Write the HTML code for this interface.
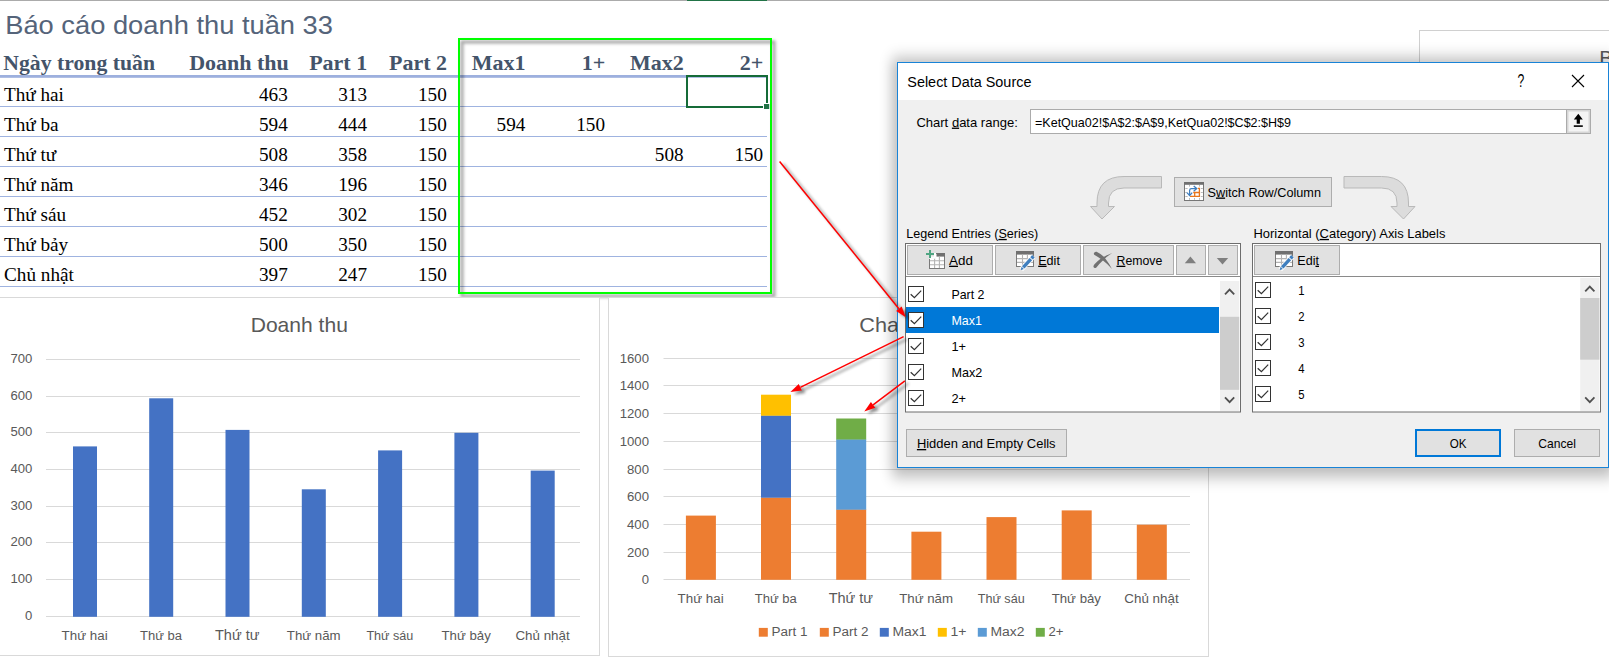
<!DOCTYPE html>
<html><head><meta charset="utf-8"><title>Select Data Source</title>
<style>
html,body{margin:0;padding:0;background:#fff;}
body{width:1609px;height:659px;overflow:hidden;font-family:"Liberation Sans",sans-serif;}
svg{display:block;position:absolute;left:0;top:0;}
text{font-family:"Liberation Sans",sans-serif;white-space:pre;}
text.sf{font-family:"Liberation Serif",serif;}
</style></head><body>
<svg width="1609" height="659" viewBox="0 0 1609 659">
<defs>
<filter id="dlgsh" x="-10%" y="-15%" width="120%" height="140%"><feGaussianBlur stdDeviation="6.5 8"/></filter>
<filter id="gsh" x="-10%" y="-10%" width="125%" height="125%"><feGaussianBlur stdDeviation="1.8"/></filter>
<filter id="ash" x="-20%" y="-20%" width="150%" height="150%"><feGaussianBlur stdDeviation="1.5"/></filter>
</defs>
<rect x="0" y="0" width="1609" height="659" fill="#fff"/>

<rect x="0" y="0" width="1609" height="1" fill="#ababab"/>
<rect x="687" y="0" width="80" height="1" fill="#217346"/>
<text y="33.8" font-size="26.2" fill="#55647a" x="5.2" textLength="327.8" lengthAdjust="spacingAndGlyphs" >Báo cáo doanh thu tuần 33</text>
<text y="69.8" font-size="22" fill="#44546a" class="sf" font-weight="bold" x="3.3" textLength="151.7" lengthAdjust="spacingAndGlyphs" >Ngày trong tuần</text>
<text y="69.8" font-size="22" fill="#44546a" class="sf" font-weight="bold" x="288.8" text-anchor="end" >Doanh thu</text>
<text y="69.8" font-size="22" fill="#44546a" class="sf" font-weight="bold" x="367.2" text-anchor="end" >Part 1</text>
<text y="69.8" font-size="22" fill="#44546a" class="sf" font-weight="bold" x="447.0" text-anchor="end" >Part 2</text>
<text y="69.8" font-size="22" fill="#44546a" class="sf" font-weight="bold" x="525.6" text-anchor="end" >Max1</text>
<text y="69.8" font-size="22" fill="#44546a" class="sf" font-weight="bold" x="605.2" text-anchor="end" >1+</text>
<text y="69.8" font-size="22" fill="#44546a" class="sf" font-weight="bold" x="683.8000000000001" text-anchor="end" >Max2</text>
<text y="69.8" font-size="22" fill="#44546a" class="sf" font-weight="bold" x="763.4000000000001" text-anchor="end" >2+</text>
<rect x="0" y="75" width="767" height="2.8" fill="#9db0de"/>
<text y="100.8" font-size="19.2" fill="#000" class="sf" x="4" >Thứ hai</text>
<text y="100.8" font-size="19.2" fill="#000" class="sf" x="287.8" text-anchor="end" >463</text>
<text y="100.8" font-size="19.2" fill="#000" class="sf" x="367" text-anchor="end" >313</text>
<text y="100.8" font-size="19.2" fill="#000" class="sf" x="446.8" text-anchor="end" >150</text>
<rect x="0" y="106" width="767" height="1" fill="#9fb3e0"/>
<text y="130.8" font-size="19.2" fill="#000" class="sf" x="4" >Thứ ba</text>
<text y="130.8" font-size="19.2" fill="#000" class="sf" x="287.8" text-anchor="end" >594</text>
<text y="130.8" font-size="19.2" fill="#000" class="sf" x="367" text-anchor="end" >444</text>
<text y="130.8" font-size="19.2" fill="#000" class="sf" x="446.8" text-anchor="end" >150</text>
<text y="130.8" font-size="19.2" fill="#000" class="sf" x="525.4" text-anchor="end" >594</text>
<text y="130.8" font-size="19.2" fill="#000" class="sf" x="605" text-anchor="end" >150</text>
<rect x="0" y="136" width="767" height="1" fill="#9fb3e0"/>
<text y="160.8" font-size="19.2" fill="#000" class="sf" x="4" >Thứ tư</text>
<text y="160.8" font-size="19.2" fill="#000" class="sf" x="287.8" text-anchor="end" >508</text>
<text y="160.8" font-size="19.2" fill="#000" class="sf" x="367" text-anchor="end" >358</text>
<text y="160.8" font-size="19.2" fill="#000" class="sf" x="446.8" text-anchor="end" >150</text>
<text y="160.8" font-size="19.2" fill="#000" class="sf" x="683.6" text-anchor="end" >508</text>
<text y="160.8" font-size="19.2" fill="#000" class="sf" x="763.2" text-anchor="end" >150</text>
<rect x="0" y="166" width="767" height="1" fill="#9fb3e0"/>
<text y="190.8" font-size="19.2" fill="#000" class="sf" x="4" >Thứ năm</text>
<text y="190.8" font-size="19.2" fill="#000" class="sf" x="287.8" text-anchor="end" >346</text>
<text y="190.8" font-size="19.2" fill="#000" class="sf" x="367" text-anchor="end" >196</text>
<text y="190.8" font-size="19.2" fill="#000" class="sf" x="446.8" text-anchor="end" >150</text>
<rect x="0" y="196" width="767" height="1" fill="#9fb3e0"/>
<text y="220.8" font-size="19.2" fill="#000" class="sf" x="4" >Thứ sáu</text>
<text y="220.8" font-size="19.2" fill="#000" class="sf" x="287.8" text-anchor="end" >452</text>
<text y="220.8" font-size="19.2" fill="#000" class="sf" x="367" text-anchor="end" >302</text>
<text y="220.8" font-size="19.2" fill="#000" class="sf" x="446.8" text-anchor="end" >150</text>
<rect x="0" y="226" width="767" height="1" fill="#9fb3e0"/>
<text y="250.8" font-size="19.2" fill="#000" class="sf" x="4" >Thứ bảy</text>
<text y="250.8" font-size="19.2" fill="#000" class="sf" x="287.8" text-anchor="end" >500</text>
<text y="250.8" font-size="19.2" fill="#000" class="sf" x="367" text-anchor="end" >350</text>
<text y="250.8" font-size="19.2" fill="#000" class="sf" x="446.8" text-anchor="end" >150</text>
<rect x="0" y="256" width="767" height="1" fill="#9fb3e0"/>
<text y="280.8" font-size="19.2" fill="#000" class="sf" x="4" >Chủ nhật</text>
<text y="280.8" font-size="19.2" fill="#000" class="sf" x="287.8" text-anchor="end" >397</text>
<text y="280.8" font-size="19.2" fill="#000" class="sf" x="367" text-anchor="end" >247</text>
<text y="280.8" font-size="19.2" fill="#000" class="sf" x="446.8" text-anchor="end" >150</text>
<rect x="0" y="286" width="767" height="1" fill="#9fb3e0"/>
<rect x="462" y="42" width="312" height="254" fill="none" stroke="#000" stroke-opacity="0.36" stroke-width="3" filter="url(#gsh)"/>
<rect x="459" y="39" width="312" height="254" fill="none" stroke="#00ff00" stroke-width="2"/>
<rect x="687" y="76" width="80" height="31" fill="none" stroke="#156b38" stroke-width="2"/>
<rect x="763" y="103" width="7" height="7" fill="#fff"/><rect x="764" y="104" width="5.2" height="5" fill="#217346"/>
<rect x="-1.5" y="297.5" width="601" height="358" fill="#fff" stroke="#d9d9d9"/>
<text y="331.8" font-size="20.4" fill="#595959" x="250.7" textLength="97.2" lengthAdjust="spacingAndGlyphs" >Doanh thu</text>
<line x1="46" x2="580" y1="616.5" y2="616.5" stroke="#d9d9d9"/>
<text y="620.2" font-size="12.1" fill="#595959" x="25.0" textLength="7.3" lengthAdjust="spacingAndGlyphs" >0</text>
<line x1="46" x2="580" y1="579.5" y2="579.5" stroke="#d9d9d9"/>
<text y="583.2" font-size="12.1" fill="#595959" x="10.4" textLength="21.9" lengthAdjust="spacingAndGlyphs" >100</text>
<line x1="46" x2="580" y1="542.5" y2="542.5" stroke="#d9d9d9"/>
<text y="546.2" font-size="12.1" fill="#595959" x="10.4" textLength="21.9" lengthAdjust="spacingAndGlyphs" >200</text>
<line x1="46" x2="580" y1="506.5" y2="506.5" stroke="#d9d9d9"/>
<text y="510.2" font-size="12.1" fill="#595959" x="10.4" textLength="21.9" lengthAdjust="spacingAndGlyphs" >300</text>
<line x1="46" x2="580" y1="469.5" y2="469.5" stroke="#d9d9d9"/>
<text y="473.2" font-size="12.1" fill="#595959" x="10.4" textLength="21.9" lengthAdjust="spacingAndGlyphs" >400</text>
<line x1="46" x2="580" y1="432.5" y2="432.5" stroke="#d9d9d9"/>
<text y="436.2" font-size="12.1" fill="#595959" x="10.4" textLength="21.9" lengthAdjust="spacingAndGlyphs" >500</text>
<line x1="46" x2="580" y1="396.5" y2="396.5" stroke="#d9d9d9"/>
<text y="400.2" font-size="12.1" fill="#595959" x="10.4" textLength="21.9" lengthAdjust="spacingAndGlyphs" >600</text>
<line x1="46" x2="580" y1="359.5" y2="359.5" stroke="#d9d9d9"/>
<text y="363.2" font-size="12.1" fill="#595959" x="10.4" textLength="21.9" lengthAdjust="spacingAndGlyphs" >700</text>
<rect x="73.0" y="446.4" width="24" height="170.4" fill="#4472c4"/>
<rect x="149.2" y="398.3" width="24" height="218.5" fill="#4472c4"/>
<rect x="225.5" y="429.9" width="24" height="186.9" fill="#4472c4"/>
<rect x="301.8" y="489.3" width="24" height="127.5" fill="#4472c4"/>
<rect x="378.1" y="450.4" width="24" height="166.4" fill="#4472c4"/>
<rect x="454.4" y="432.8" width="24" height="184.0" fill="#4472c4"/>
<rect x="530.7" y="470.6" width="24" height="146.2" fill="#4472c4"/>
<text y="640" font-size="12.5" fill="#595959" x="61.6" textLength="46.0" lengthAdjust="spacingAndGlyphs" >Thứ hai</text>
<text y="640" font-size="12.5" fill="#595959" x="140" textLength="42" lengthAdjust="spacingAndGlyphs" >Thứ ba</text>
<text y="640" font-size="15.1" fill="#595959" x="215" textLength="44.4" lengthAdjust="spacingAndGlyphs" >Thứ tư</text>
<text y="640" font-size="12.5" fill="#595959" x="286.8" textLength="53.8" lengthAdjust="spacingAndGlyphs" >Thứ năm</text>
<text y="640" font-size="12.5" fill="#595959" x="366.4" textLength="47.0" lengthAdjust="spacingAndGlyphs" >Thứ sáu</text>
<text y="640" font-size="12.5" fill="#595959" x="441.5" textLength="49.3" lengthAdjust="spacingAndGlyphs" >Thứ bảy</text>
<text y="640" font-size="12.5" fill="#595959" x="515.4" textLength="54.3" lengthAdjust="spacingAndGlyphs" >Chủ nhật</text>
<rect x="608.5" y="297.5" width="600" height="359" fill="#fff" stroke="#d9d9d9"/>
<text y="331.8" font-size="20.4" fill="#595959" x="859.3" textLength="98.7" lengthAdjust="spacingAndGlyphs" >Chart Title</text>
<line x1="663.5" x2="1190" y1="579.5" y2="579.5" stroke="#d9d9d9"/>
<text y="583.7" font-size="12" fill="#595959" x="641.7" textLength="7.3" lengthAdjust="spacingAndGlyphs" >0</text>
<line x1="663.5" x2="1190" y1="552.5" y2="552.5" stroke="#d9d9d9"/>
<text y="556.7" font-size="12" fill="#595959" x="627.0" textLength="22.0" lengthAdjust="spacingAndGlyphs" >200</text>
<line x1="663.5" x2="1190" y1="524.5" y2="524.5" stroke="#d9d9d9"/>
<text y="528.7" font-size="12" fill="#595959" x="627.0" textLength="22.0" lengthAdjust="spacingAndGlyphs" >400</text>
<line x1="663.5" x2="1190" y1="496.5" y2="496.5" stroke="#d9d9d9"/>
<text y="500.7" font-size="12" fill="#595959" x="627.0" textLength="22.0" lengthAdjust="spacingAndGlyphs" >600</text>
<line x1="663.5" x2="1190" y1="469.5" y2="469.5" stroke="#d9d9d9"/>
<text y="473.7" font-size="12" fill="#595959" x="627.0" textLength="22.0" lengthAdjust="spacingAndGlyphs" >800</text>
<line x1="663.5" x2="1190" y1="441.5" y2="441.5" stroke="#d9d9d9"/>
<text y="445.7" font-size="12" fill="#595959" x="619.7" textLength="29.3" lengthAdjust="spacingAndGlyphs" >1000</text>
<line x1="663.5" x2="1190" y1="413.5" y2="413.5" stroke="#d9d9d9"/>
<text y="417.7" font-size="12" fill="#595959" x="619.7" textLength="29.3" lengthAdjust="spacingAndGlyphs" >1200</text>
<line x1="663.5" x2="1190" y1="385.5" y2="385.5" stroke="#d9d9d9"/>
<text y="389.7" font-size="12" fill="#595959" x="619.7" textLength="29.3" lengthAdjust="spacingAndGlyphs" >1400</text>
<line x1="663.5" x2="1190" y1="358.5" y2="358.5" stroke="#d9d9d9"/>
<text y="362.7" font-size="12" fill="#595959" x="619.7" textLength="29.3" lengthAdjust="spacingAndGlyphs" >1600</text>
<rect x="685.9" y="515.6" width="30" height="64.2" fill="#ed7d31"/>
<rect x="761.0" y="497.5" width="30" height="82.3" fill="#ed7d31"/>
<rect x="761.0" y="415.4" width="30" height="82.3" fill="#4472c4"/>
<rect x="761.0" y="394.7" width="30" height="21.0" fill="#ffc000"/>
<rect x="836.2" y="509.3" width="30" height="70.5" fill="#ed7d31"/>
<rect x="836.2" y="439.2" width="30" height="70.5" fill="#5b9bd5"/>
<rect x="836.2" y="418.5" width="30" height="21.0" fill="#70ad47"/>
<rect x="911.4" y="531.7" width="30" height="48.1" fill="#ed7d31"/>
<rect x="986.5" y="517.1" width="30" height="62.7" fill="#ed7d31"/>
<rect x="1061.7" y="510.4" width="30" height="69.4" fill="#ed7d31"/>
<rect x="1136.8" y="524.7" width="30" height="55.1" fill="#ed7d31"/>
<text y="603" font-size="12.5" fill="#595959" x="677.6" textLength="46.0" lengthAdjust="spacingAndGlyphs" >Thứ hai</text>
<text y="603" font-size="12.5" fill="#595959" x="754.8" textLength="42.0" lengthAdjust="spacingAndGlyphs" >Thứ ba</text>
<text y="603" font-size="15.1" fill="#595959" x="828.7" textLength="44.4" lengthAdjust="spacingAndGlyphs" >Thứ tư</text>
<text y="603" font-size="12.5" fill="#595959" x="899.2" textLength="53.8" lengthAdjust="spacingAndGlyphs" >Thứ năm</text>
<text y="603" font-size="12.5" fill="#595959" x="977.7" textLength="47.0" lengthAdjust="spacingAndGlyphs" >Thứ sáu</text>
<text y="603" font-size="12.5" fill="#595959" x="1051.7" textLength="49.3" lengthAdjust="spacingAndGlyphs" >Thứ bảy</text>
<text y="603" font-size="12.5" fill="#595959" x="1124.3" textLength="54.4" lengthAdjust="spacingAndGlyphs" >Chủ nhật</text>
<rect x="758.8" y="627.9" width="9" height="8.8" fill="#ed7d31"/>
<text y="636" font-size="12.5" fill="#595959" x="771.5" textLength="36.0" lengthAdjust="spacingAndGlyphs" >Part 1</text>
<rect x="819.8" y="627.9" width="9" height="8.8" fill="#ed7d31"/>
<text y="636" font-size="12.5" fill="#595959" x="832.5" textLength="36.0" lengthAdjust="spacingAndGlyphs" >Part 2</text>
<rect x="879.8" y="627.9" width="9" height="8.8" fill="#4472c4"/>
<text y="636" font-size="12.5" fill="#595959" x="892.5" textLength="34.0" lengthAdjust="spacingAndGlyphs" >Max1</text>
<rect x="937.8" y="627.9" width="9" height="8.8" fill="#ffc000"/>
<text y="636" font-size="12.5" fill="#595959" x="950.5" textLength="16.0" lengthAdjust="spacingAndGlyphs" >1+</text>
<rect x="977.8" y="627.9" width="9" height="8.8" fill="#5b9bd5"/>
<text y="636" font-size="12.5" fill="#595959" x="990.5" textLength="34.0" lengthAdjust="spacingAndGlyphs" >Max2</text>
<rect x="1035.8" y="627.9" width="9" height="8.8" fill="#70ad47"/>
<text y="636" font-size="12.5" fill="#595959" x="1048.5" textLength="15.0" lengthAdjust="spacingAndGlyphs" >2+</text>
<rect x="1419.5" y="30.5" width="300" height="300" fill="#fff" stroke="#d0d0d0"/>
<text y="65" font-size="20.4" fill="#595959" x="1599.2" >B</text>
<rect x="892" y="58" width="722" height="419" fill="#000" opacity="0.27" filter="url(#dlgsh)"/>
<rect x="897.5" y="62.5" width="711" height="405" fill="#f0f0f0" stroke="#1883d7"/>
<rect x="898" y="63" width="710" height="37" fill="#fff"/>
<text y="87" font-size="14.7" fill="#000" x="907.3" textLength="124.1" lengthAdjust="spacingAndGlyphs" >Select Data Source</text>
<text y="87.2" font-size="17.6" fill="#000" x="1517.6" textLength="6.8" lengthAdjust="spacingAndGlyphs" >?</text>
<path d="M1572 75 L1584 87 M1584 75 L1572 87" stroke="#000" stroke-width="1.1" fill="none"/>
<text y="126.6" font-size="13.2" fill="#000" x="916.4" textLength="101.4" lengthAdjust="spacingAndGlyphs" >Chart <tspan text-decoration="underline">d</tspan>ata range:</text>
<rect x="1030.5" y="109.5" width="560" height="24" fill="#fff" stroke="#ababab"/>
<text y="127" font-size="13.2" fill="#000" x="1035" textLength="256" lengthAdjust="spacingAndGlyphs" >=KetQua02!$A$2:$A$9,KetQua02!$C$2:$H$9</text>
<rect x="1566.5" y="109.5" width="24" height="24" fill="#d6d6d6" stroke="#ababab"/>
<rect x="1568.5" y="111.5" width="20" height="20" fill="#f4f4f4"/>
<path d="M1578.3 113.8 L1573.8 119.6 H1576.7 V123.8 H1579.9 V119.6 H1582.8 Z" fill="#000"/><rect x="1573.8" y="125.3" width="9" height="1.6" fill="#000"/>
<path d="M1161.5 176.5 H1124 Q1097 176.5 1097 203 V206.5 H1090.5 L1102 219 L1114.5 206.5 H1108.5 V203 Q1108.5 188 1124 188 H1161.5 Z" fill="#dcdcdc" stroke="#b9b9b9"/>
<path d="M1161.5 176.5 H1124 Q1097 176.5 1097 203 V206.5 H1090.5 L1102 219 L1114.5 206.5 H1108.5 V203 Q1108.5 188 1124 188 H1161.5 Z" fill="#dcdcdc" stroke="#b9b9b9" transform="translate(2505.5,0) scale(-1,1)"/>
<rect x="1174.5" y="177.5" width="157" height="29" fill="#e1e1e1" stroke="#adadad"/>
<text y="196.5" font-size="13.2" fill="#000" x="1207.5" textLength="113.5" lengthAdjust="spacingAndGlyphs" >S<tspan text-decoration="underline">w</tspan>itch Row/Column</text>
<g><rect x="1184.5" y="182.5" width="19" height="18" fill="#fff" stroke="#777"/><rect x="1184" y="182" width="20" height="2.8" fill="#707070"/><path d="M1185.3 188.5 H1187.6 M1185.3 192.5 H1187 M1185.3 196.5 H1187.6 M1200.8 188.5 H1202.8 M1200.8 192.5 H1202.8 M1200.8 196.5 H1202.8 M1189.5 185 V186.6 M1199.5 185 V186.6 M1189.5 198 V199.8 M1194.5 198 V199.8 M1199.5 198 V199.8" stroke="#b8b8b8" fill="none"/><path d="M1190 196.3 H1199.4 V188.3 H1197.9 M1193.2 192.5 H1199.4 M1194.7 192.5 V196.3" stroke="#e8761c" stroke-width="1.3" fill="none"/><path d="M1189.6 195 V190.4 Q1189.6 188.6 1191.4 188.6 H1196.3" stroke="#3e7dbd" stroke-width="1.25" fill="none"/><path d="M1193.7 186 L1196.7 188.6 L1193.7 191.2 M1187 192.6 L1189.6 195.6 L1192.2 192.6" stroke="#3e7dbd" stroke-width="1.3" fill="none"/></g>
<text y="237.9" font-size="13.2" fill="#000" x="906.2" textLength="132.0" lengthAdjust="spacingAndGlyphs" >Legend Entries (<tspan text-decoration="underline">S</tspan>eries)</text>
<text y="237.9" font-size="13.2" fill="#000" x="1253.5" textLength="191.9" lengthAdjust="spacingAndGlyphs" >Horizontal (<tspan text-decoration="underline">C</tspan>ategory) Axis Labels</text>
<rect x="905.5" y="243.5" width="335" height="168.5" fill="#fff" stroke="#6d6d6d"/>
<rect x="906" y="276" width="334" height="1" fill="#8a8a8a"/>
<rect x="907.5" y="245.5" width="85.0" height="29.0" fill="#e1e1e1" stroke="#adadad"/>
<rect x="995.5" y="245.5" width="85.0" height="29.0" fill="#e1e1e1" stroke="#adadad"/>
<rect x="1083.5" y="245.5" width="90.0" height="29.0" fill="#e1e1e1" stroke="#adadad"/>
<rect x="1176.5" y="245.5" width="29.0" height="29.0" fill="#e1e1e1" stroke="#adadad"/>
<rect x="1208.5" y="245.5" width="29.0" height="29.0" fill="#e1e1e1" stroke="#adadad"/>
<text y="264.7" font-size="13.2" fill="#000" x="949.1" textLength="23.8" lengthAdjust="spacingAndGlyphs" ><tspan text-decoration="underline">A</tspan>dd</text>
<text y="264.7" font-size="13.2" fill="#000" x="1038.2" textLength="21.7" lengthAdjust="spacingAndGlyphs" ><tspan text-decoration="underline">E</tspan>dit</text>
<text y="264.7" font-size="13.2" fill="#000" x="1116.5" textLength="45.8" lengthAdjust="spacingAndGlyphs" ><tspan text-decoration="underline">R</tspan>emove</text>
<rect x="929.5" y="253.5" width="15" height="15" fill="#fff" stroke="#7a7a7a"/><rect x="936.5" y="253" width="8.5" height="3.6" fill="#707070"/><path d="M934.6 256.6 V268 M939.4 256.6 V268 M930 260.7 H944 M930 264.7 H944 " stroke="#b4b4b4" stroke-width="1.1" fill="none"/>
<rect x="925.5" y="249.5" width="9" height="9" fill="#e1e1e1"/><rect x="929" y="256.5" width="6.5" height="2.2" fill="#fff"/><rect x="934" y="253" width="2" height="4" fill="#fff"/>
<path d="M930 250 V258 M926 254 H934" stroke="#4fa582" stroke-width="2" fill="none"/>
<rect x="1016.5" y="251.5" width="17" height="15" fill="#fff" stroke="#7a7a7a"/><rect x="1016" y="251" width="18" height="3.6" fill="#707070"/><path d="M1022.5 254.6 V266 M1027.4 254.6 V266 M1017 258.6 H1033 M1017 262.4 H1033 " stroke="#b4b4b4" stroke-width="1.1" fill="none"/>
<path d="M1021.20 269.58 L1033.45 256.25" stroke="#fff" stroke-width="5" stroke-opacity="0.9" fill="none"/>
<path d="M1021.22 270.00 L1023.89 268.92 L1021.63 266.85 L1020.78 269.60 Z" fill="#3f7fbf"/>
<path d="M1024.48 268.52 L1032.13 260.20 L1029.63 257.90 L1021.98 266.22 Z" fill="#3f7fbf"/>
<path d="M1032.74 259.54 L1034.70 257.40 L1032.20 255.10 L1030.24 257.24 Z" fill="#3f7fbf"/>
<path d="M1093.9 253.3 Q1094.4 251.3 1096.6 251.7 Q1102.6 254.6 1106 259.4 Q1109.6 264 1112 269 Q1107 263.6 1103 260.6 Q1098 256.6 1094.6 254.9 Q1093.6 254.3 1093.9 253.3 Z" fill="#717171"/>
<path d="M1093.5 267 Q1093.2 265.3 1094.7 264 Q1100 258.2 1105 256.2 Q1108.5 254.4 1112.3 252.9 Q1107 256.4 1103.9 259.4 Q1099.2 263.7 1096.4 267.4 Q1094.5 268.9 1093.5 267 Z" fill="#717171"/>
<path d="M1184.8 263.2 L1190.4 256.4 L1196 263.2 Z" fill="#7f7f7f"/>
<path d="M1216.8 258 L1222.5 264.6 L1228.2 258 Z" fill="#7f7f7f"/>
<rect x="906" y="307" width="313" height="26" fill="#0078d7"/>
<rect x="908.5" y="286.5" width="15" height="15" fill="#fff" stroke="#333"/>
<path d="M910.7 294.2 L914.4 297.7 L921.2 290.6" stroke="#333" stroke-width="1.25" fill="none"/>
<text y="298.7" font-size="13.2" fill="#000" x="951.4" textLength="33.1" lengthAdjust="spacingAndGlyphs" >Part 2</text>
<rect x="908.5" y="312.5" width="15" height="15" fill="#fff" stroke="#333"/>
<path d="M910.7 320.2 L914.4 323.7 L921.2 316.6" stroke="#333" stroke-width="1.25" fill="none"/>
<text y="324.7" font-size="13.2" fill="#fff" x="951.4" textLength="30.4" lengthAdjust="spacingAndGlyphs" >Max1</text>
<rect x="908.5" y="338.5" width="15" height="15" fill="#fff" stroke="#333"/>
<path d="M910.7 346.2 L914.4 349.7 L921.2 342.6" stroke="#333" stroke-width="1.25" fill="none"/>
<text y="350.7" font-size="13.2" fill="#000" x="951.4" textLength="14.6" lengthAdjust="spacingAndGlyphs" >1+</text>
<rect x="908.5" y="364.5" width="15" height="15" fill="#fff" stroke="#333"/>
<path d="M910.7 372.2 L914.4 375.7 L921.2 368.6" stroke="#333" stroke-width="1.25" fill="none"/>
<text y="376.7" font-size="13.2" fill="#000" x="951.4" textLength="30.8" lengthAdjust="spacingAndGlyphs" >Max2</text>
<rect x="908.5" y="390.5" width="15" height="15" fill="#fff" stroke="#333"/>
<path d="M910.7 398.2 L914.4 401.7 L921.2 394.6" stroke="#333" stroke-width="1.25" fill="none"/>
<text y="402.7" font-size="13.2" fill="#000" x="951.4" textLength="14.6" lengthAdjust="spacingAndGlyphs" >2+</text>
<rect x="1220" y="281" width="19.2" height="130" fill="#f0f0f0"/>
<rect x="1220" y="316.8" width="19.2" height="73.0" fill="#cdcdcd"/>
<path d="M1225.0 294.4 L1229.6 289.6 L1234.1999999999998 294.4" stroke="#505050" stroke-width="1.8" fill="none"/>
<path d="M1225.0 397.4 L1229.6 402.2 L1234.1999999999998 397.4" stroke="#505050" stroke-width="1.8" fill="none"/>
<rect x="1252.5" y="243.5" width="348" height="168.5" fill="#fff" stroke="#6d6d6d"/>
<rect x="1253" y="276" width="347" height="1" fill="#8a8a8a"/>
<rect x="1254.5" y="245.5" width="85.0" height="29.0" fill="#e1e1e1" stroke="#adadad"/>
<rect x="1275.5" y="251.5" width="17" height="15" fill="#fff" stroke="#7a7a7a"/><rect x="1275" y="251" width="18" height="3.6" fill="#707070"/><path d="M1281.5 254.6 V266 M1286.4 254.6 V266 M1276 258.6 H1292 M1276 262.4 H1292 " stroke="#b4b4b4" stroke-width="1.1" fill="none"/>
<path d="M1280.20 269.58 L1292.45 256.25" stroke="#fff" stroke-width="5" stroke-opacity="0.9" fill="none"/>
<path d="M1280.22 270.00 L1282.89 268.92 L1280.63 266.85 L1279.78 269.60 Z" fill="#3f7fbf"/>
<path d="M1283.48 268.52 L1291.13 260.20 L1288.63 257.90 L1280.98 266.22 Z" fill="#3f7fbf"/>
<path d="M1291.74 259.54 L1293.70 257.40 L1291.20 255.10 L1289.24 257.24 Z" fill="#3f7fbf"/>
<text y="264.7" font-size="13.2" fill="#000" x="1297.3" textLength="21.7" lengthAdjust="spacingAndGlyphs" >Edi<tspan text-decoration="underline">t</tspan></text>
<rect x="1255.5" y="282.5" width="15" height="15" fill="#fff" stroke="#333"/>
<path d="M1257.7 290.2 L1261.4 293.7 L1268.2 286.6" stroke="#333" stroke-width="1.25" fill="none"/>
<text y="294.9" font-size="13.2" fill="#000" x="1298.2" textLength="6.3" lengthAdjust="spacingAndGlyphs" >1</text>
<rect x="1255.5" y="308.5" width="15" height="15" fill="#fff" stroke="#333"/>
<path d="M1257.7 316.2 L1261.4 319.7 L1268.2 312.6" stroke="#333" stroke-width="1.25" fill="none"/>
<text y="320.9" font-size="13.2" fill="#000" x="1298.2" textLength="6.3" lengthAdjust="spacingAndGlyphs" >2</text>
<rect x="1255.5" y="334.5" width="15" height="15" fill="#fff" stroke="#333"/>
<path d="M1257.7 342.2 L1261.4 345.7 L1268.2 338.6" stroke="#333" stroke-width="1.25" fill="none"/>
<text y="346.9" font-size="13.2" fill="#000" x="1298.2" textLength="6.3" lengthAdjust="spacingAndGlyphs" >3</text>
<rect x="1255.5" y="360.5" width="15" height="15" fill="#fff" stroke="#333"/>
<path d="M1257.7 368.2 L1261.4 371.7 L1268.2 364.6" stroke="#333" stroke-width="1.25" fill="none"/>
<text y="372.9" font-size="13.2" fill="#000" x="1298.2" textLength="6.3" lengthAdjust="spacingAndGlyphs" >4</text>
<rect x="1255.5" y="386.5" width="15" height="15" fill="#fff" stroke="#333"/>
<path d="M1257.7 394.2 L1261.4 397.7 L1268.2 390.6" stroke="#333" stroke-width="1.25" fill="none"/>
<text y="398.9" font-size="13.2" fill="#000" x="1298.2" textLength="6.3" lengthAdjust="spacingAndGlyphs" >5</text>
<rect x="1580.2" y="278" width="19.2" height="133" fill="#f0f0f0"/>
<rect x="1580.2" y="298" width="19.2" height="61.69999999999999" fill="#cdcdcd"/>
<path d="M1585.2 291.4 L1589.8 286.6 L1594.3999999999999 291.4" stroke="#505050" stroke-width="1.8" fill="none"/>
<path d="M1585.2 397.4 L1589.8 402.2 L1594.3999999999999 397.4" stroke="#505050" stroke-width="1.8" fill="none"/>
<rect x="906.5" y="429.5" width="160" height="27" fill="#e1e1e1" stroke="#adadad"/>
<text y="448" font-size="13.2" fill="#000" x="916.9" textLength="138.7" lengthAdjust="spacingAndGlyphs" ><tspan text-decoration="underline">H</tspan>idden and Empty Cells</text>
<rect x="1416" y="430" width="84" height="26" fill="#e1e1e1" stroke="#0078d7" stroke-width="2"/>
<text y="448" font-size="13.2" fill="#000" x="1449.7" textLength="16.8" lengthAdjust="spacingAndGlyphs" >OK</text>
<rect x="1514.5" y="429.5" width="85" height="27" fill="#e1e1e1" stroke="#adadad"/>
<text y="448" font-size="13.2" fill="#000" x="1538.3" textLength="37.7" lengthAdjust="spacingAndGlyphs" >Cancel</text>
<g transform="translate(3.5,2.5)" opacity="0.45" filter="url(#ash)"><path d="M779.6 161.5 L898.9 308.7" stroke="#000" stroke-width="1.6" fill="none"/><path d="M905.8 317.2 L896.1 310.9 L901.7 306.4 Z" fill="#000"/></g>
<path d="M779.6 161.5 L898.9 308.7" stroke="#ff0000" stroke-width="1.5" fill="none"/><path d="M905.8 317.2 L896.1 310.9 L901.7 306.4 Z" fill="#ff0000"/>
<g transform="translate(3.5,2.5)" opacity="0.45" filter="url(#ash)"><path d="M903.6 336.7 L800.3 387.3" stroke="#000" stroke-width="1.6" fill="none"/><path d="M790.4 392.1 L798.7 384.0 L801.9 390.5 Z" fill="#000"/></g>
<path d="M903.6 336.7 L800.3 387.3" stroke="#ff0000" stroke-width="1.5" fill="none"/><path d="M790.4 392.1 L798.7 384.0 L801.9 390.5 Z" fill="#ff0000"/>
<g transform="translate(3.5,2.5)" opacity="0.45" filter="url(#ash)"><path d="M904.9 380.9 L873.1 404.9" stroke="#000" stroke-width="1.6" fill="none"/><path d="M864.3 411.5 L870.9 402.0 L875.3 407.8 Z" fill="#000"/></g>
<path d="M904.9 380.9 L873.1 404.9" stroke="#ff0000" stroke-width="1.5" fill="none"/><path d="M864.3 411.5 L870.9 402.0 L875.3 407.8 Z" fill="#ff0000"/>
</svg></body></html>
